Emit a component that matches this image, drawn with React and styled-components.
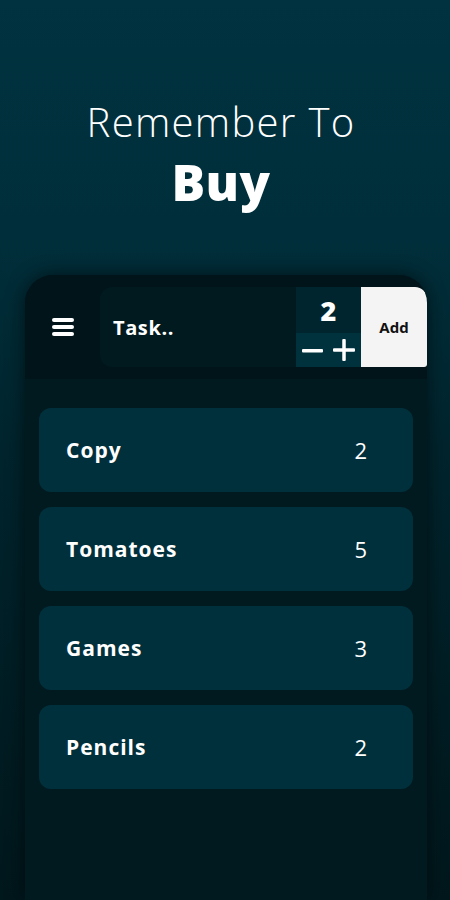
import React, { useState } from 'react';
import styled, { createGlobalStyle } from 'styled-components';

const GlobalStyle = createGlobalStyle`
  * { box-sizing: border-box; }
  body {
    margin: 0;
    font-family: 'Open Sans', 'Lato', sans-serif;
    background: #001a20;
  }
`;

const Screen = styled.div`
  width: 450px;
  height: 900px;
  overflow: hidden;
  display: flex;
  flex-direction: column;
  align-items: center;
  background: linear-gradient(180deg, #00323f 0%, #002f3b 25%, #00242d 50%, #00171c 100%);
`;

const Heading = styled.div`
  display: flex;
  flex-direction: column;
  align-items: center;
  gap: 8px;
  color: #ffffff;
  padding-top: 98px;
  padding-right: 8px;
  height: 275px;
`;

const Subtitle = styled.h2`
  margin: 0;
  font-family: 'Open Sans', sans-serif;
  font-weight: 300;
  font-size: 40px;
  line-height: 48px;
  letter-spacing: 1.3px;
`;

const Title = styled.h1`
  margin: 0;
  font-family: 'Open Sans', sans-serif;
  font-weight: 800;
  font-size: 50px;
  line-height: 56px;
  letter-spacing: 0.5px;
`;

const Card = styled.section`
  width: 402px;
  margin-left: 2px;
  flex: 1;
  background: #001a20;
  border-radius: 28px 28px 0 0;
  box-shadow: 0 0 18px rgba(0, 8, 10, 0.7);
  overflow: hidden;
`;

const Header = styled.div`
  height: 104px;
  display: flex;
  align-items: flex-start;
  padding-top: 12px;
  background: #00141a;
`;

const MenuButton = styled.button`
  width: 75px;
  height: 80px;
  display: flex;
  align-items: center;
  justify-content: center;
  background: none;
  border: none;
  padding: 0;
  cursor: pointer;
`;

const TaskInput = styled.input`
  width: 196px;
  height: 80px;
  border: none;
  border-radius: 12px 0 0 12px;
  background: #001a20;
  color: #ffffff;
  padding: 0 13px;
  font-family: 'Open Sans', sans-serif;
  font-weight: 700;
  font-size: 20px;
  letter-spacing: 0.6px;
  outline: none;

  &::placeholder {
    color: #ffffff;
    opacity: 1;
  }
`;

const Counter = styled.div`
  width: 65px;
  height: 80px;
  display: flex;
  flex-direction: column;
  background: #00252e;
`;

const Count = styled.div`
  height: 46px;
  display: flex;
  align-items: center;
  justify-content: center;
  color: #ffffff;
  font-weight: 800;
  font-size: 27px;
`;

const Steps = styled.div`
  flex: 1;
  display: flex;
  align-items: center;
  justify-content: space-between;
  padding: 0 6px;
  background: #00323e;
`;

const StepButton = styled.button`
  background: none;
  border: none;
  padding: 0;
  display: flex;
  cursor: pointer;
`;

const AddButton = styled.button`
  width: 66px;
  height: 80px;
  border: none;
  border-radius: 0 12px 3px 0;
  background: #f4f4f4;
  color: #111111;
  font-family: 'Open Sans', sans-serif;
  font-weight: 700;
  font-size: 15px;
  cursor: pointer;
`;

const List = styled.ul`
  list-style: none;
  margin: 0;
  padding: 29px 14px 0;
  display: flex;
  flex-direction: column;
  gap: 15px;
`;

const Item = styled.li`
  height: 84px;
  display: flex;
  align-items: center;
  justify-content: space-between;
  padding: 0 46px 0 27px;
  border-radius: 12px;
  background: #00303c;
  color: #ffffff;
`;

const ItemName = styled.span`
  font-weight: 700;
  font-size: 21px;
  letter-spacing: 1px;
`;

const ItemQty = styled.span`
  font-weight: 400;
  font-size: 22px;
`;

const MenuIcon = () => (
  <svg width="22" height="18" viewBox="0 0 22 18">
    <rect x="0" y="0" width="22" height="4" rx="2" fill="#fff" />
    <rect x="0" y="7" width="22" height="4" rx="2" fill="#fff" />
    <rect x="0" y="14" width="22" height="4" rx="2" fill="#fff" />
  </svg>
);

const MinusIcon = () => (
  <svg width="21" height="21" viewBox="0 0 21 21">
    <rect x="0" y="9" width="21" height="3.5" rx="1" fill="#fff" />
  </svg>
);

const PlusIcon = () => (
  <svg width="22" height="22" viewBox="0 0 22 22">
    <rect x="0" y="9.25" width="22" height="3.5" rx="1" fill="#fff" />
    <rect x="9.25" y="0" width="3.5" height="22" rx="1" fill="#fff" />
  </svg>
);

const initialItems = [
  { name: 'Copy', qty: 2 },
  { name: 'Tomatoes', qty: 5 },
  { name: 'Games', qty: 3 },
  { name: 'Pencils', qty: 2 },
];

const App = () => {
  const [items, setItems] = useState(initialItems);
  const [task, setTask] = useState('');
  const [count, setCount] = useState(2);

  const addItem = () => {
    if (!task.trim()) return;
    setItems([...items, { name: task.trim(), qty: count }]);
    setTask('');
  };

  return (
    <>
      <GlobalStyle />
      <Screen>
        <Heading>
          <Subtitle>Remember To</Subtitle>
          <Title>Buy</Title>
        </Heading>

        <Card>
          <Header>
            <MenuButton aria-label="Menu">
              <MenuIcon />
            </MenuButton>
            <TaskInput
              placeholder="Task.."
              value={task}
              onChange={(e) => setTask(e.target.value)}
            />
            <Counter>
              <Count>{count}</Count>
              <Steps>
                <StepButton aria-label="Decrease" onClick={() => setCount(Math.max(1, count - 1))}>
                  <MinusIcon />
                </StepButton>
                <StepButton aria-label="Increase" onClick={() => setCount(count + 1)}>
                  <PlusIcon />
                </StepButton>
              </Steps>
            </Counter>
            <AddButton onClick={addItem}>Add</AddButton>
          </Header>

          <List>
            {items.map((item, i) => (
              <Item key={i}>
                <ItemName>{item.name}</ItemName>
                <ItemQty>{item.qty}</ItemQty>
              </Item>
            ))}
          </List>
        </Card>
      </Screen>
    </>
  );
};

export default App;
